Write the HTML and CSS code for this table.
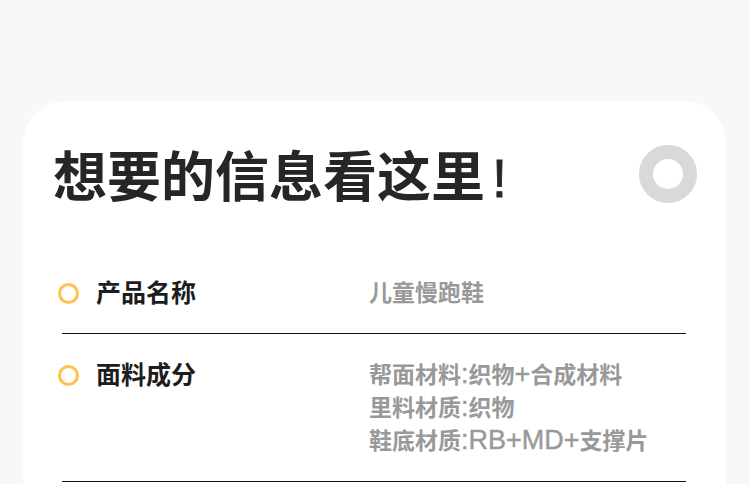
FILE: index.html
```html
<!DOCTYPE html>
<html lang="zh-CN">
<head>
  <meta charset="UTF-8">
  <meta name="viewport" content="width=device-width, initial-scale=1.0">
  <title>产品信息</title>
  <link rel="stylesheet" href="styles.css">
</head>
<body>
  <div class="card">
    <div class="card-head">
      <h1 class="title">想要的信息看这里<span class="bang">!</span></h1>
      <span class="head-ring"></span>
    </div>

    <div class="info-list">
      <div class="info-row">
        <div class="info-label"><span class="dot"></span>产品名称</div>
        <div class="info-value">儿童慢跑鞋</div>
      </div>
      <div class="divider"></div>

      <div class="info-row">
        <div class="info-label"><span class="dot"></span>面料成分</div>
        <div class="info-value">
          帮面材料<span class="latin">:</span>织物<span class="latin">+</span>合成材料<br>
          里料材质<span class="latin">:</span>织物<br>
          鞋底材质<span class="latin">:RB+MD+</span>支撑片
        </div>
      </div>
      <div class="divider"></div>
    </div>
  </div>
</body>
</html>
```

FILE: styles.css
```css
body {
  margin: 0;
  background-color: #f8f8f8;
  font-family: "Noto Sans CJK SC", sans-serif;
  color: #222;
}
.card {
  margin: 101px 24px 0 23px;
  padding: 40px 0 0 0;
  background-color: #fff;
  border-radius: 42px 42px 0 0;
  height: 420px;
}
.card-head {
  display: flex;
  align-items: center;
  justify-content: space-between;
  height: 65px;
  padding: 0 29px 0 30px;
}
.title {
  margin: 0;
  font-size: 54px;
  line-height: 65px;
  font-weight: 700;
  color: #262626;
}
.bang {
  margin-left: 7px;
  font-family: "Liberation Sans", sans-serif;
  font-weight: 400;
  line-height: 1;
  -webkit-text-stroke: 0.8px #262626;
}
.head-ring {
  width: 30px;
  height: 30px;
  border: 14px solid #d9d9d9;
  border-radius: 50%;
}
.info-list {
  margin: 46px 40px 0 35px;
}
.info-row {
  display: flex;
  padding: 23px 0 25px 0;
  line-height: 33px;
}
.info-label {
  display: flex;
  align-items: flex-start;
  width: 311px;
  font-size: 25px;
  font-weight: 700;
  color: #1d1d1d;
}
.dot {
  width: 15px;
  height: 15px;
  margin: 8px 17px 0 0;
  border: 3px solid #ffc14f;
  border-radius: 50%;
  flex-shrink: 0;
}
.info-value {
  font-size: 23px;
  color: #999;
  font-weight: 700;
}
.latin {
  font-family: "Liberation Sans", sans-serif;
  font-size: 27px;
  font-weight: 400;
  line-height: 1;
  -webkit-text-stroke: 0.4px #999;
}
.divider {
  margin-left: 4px;
  border-top: 1px solid #111;
}
```
